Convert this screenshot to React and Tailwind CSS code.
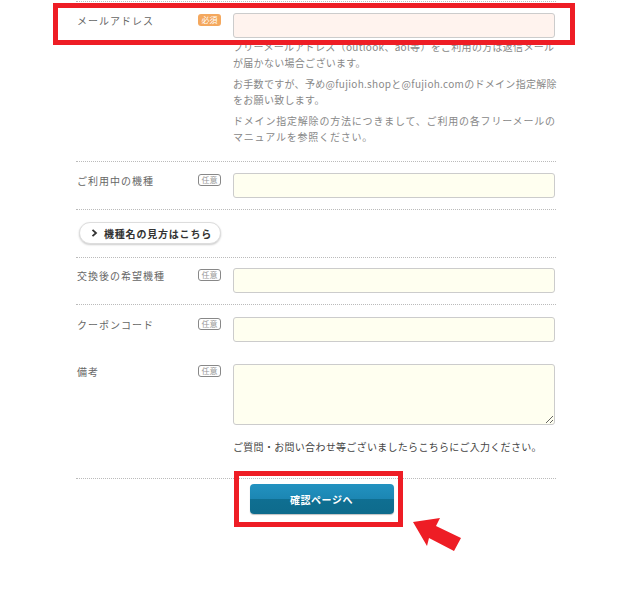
import React from "react";

const Badge = ({ required }) =>
  required ? (
    <span className="flex h-[12px] w-[23px] items-center justify-center rounded-[3px] bg-[#f4a85e] text-[8px] leading-none text-white">
      必須
    </span>
  ) : (
    <span className="flex h-[12px] w-[23px] items-center justify-center rounded-[3px] border border-[#888] text-[8px] leading-none text-[#999]">
      任意
    </span>
  );

const Row = ({ label, required, children, className = "" }) => (
  <div className={"flex items-start border-t border-dotted border-[#bbb] " + className}>
    <div className="w-[122px] shrink-0 pl-[1px] text-[10px] leading-[16px] tracking-[1px] text-[#666]">{label}</div>
    <div className="w-[35px] shrink-0 pt-[1px]">
      <Badge required={required} />
    </div>
    <div className="w-[322px] shrink-0">{children}</div>
  </div>
);

const Field = ({ bg = "bg-[#fffff0]" }) => (
  <input type="text" className={"block h-[25px] w-full rounded-[3px] border border-[#ccc] " + bg} />
);

export default function App() {
  return (
    <div className="relative h-[598px] w-[643px] overflow-hidden bg-white font-['Noto_Sans_CJK_JP',sans-serif]">
      <div className="ml-[76px] w-[480px] pt-[1px]">
        {/* email */}
        <Row label="メールアドレス" required className="pt-[11px] pb-[16px]">
          <Field bg="bg-[#fff3ee]" />
          <div className="mt-[1px] whitespace-nowrap text-[10px] leading-[16px] tracking-[0.3px] text-[#888]">
            <p className="mb-[5px]">
              フリーメールアドレス（outlook、aol等）をご利用の方は返信メール
              <br />
              が届かない場合ございます。
            </p>
            <p className="mb-[5px]">
              お手数ですが、予め@fujioh.shopと@fujioh.comのドメイン指定解除
              <br />
              をお願い致します。
            </p>
            <p className="tracking-[0.8px]">
              ドメイン指定解除の方法につきまして、ご利用の各フリーメールの
              <br />
              マニュアルを参照ください。
            </p>
          </div>
        </Row>

        <Row label="ご利用中の機種" className="pt-[11px] pb-[11px]">
          <Field />
        </Row>

        <div className="border-t border-dotted border-[#bbb] pt-[12px] pb-[13px] pl-[3px]">
          <button className="flex h-[22px] w-[142px] items-center gap-[6px] rounded-full border border-[#ddd] bg-white pl-[11px] text-[10px] font-bold tracking-[0.8px] text-[#333] shadow-[0_1px_2px_rgba(0,0,0,0.2)]">
            <svg width="7" height="8" viewBox="0 0 7 8" className="shrink-0">
              <path d="M1.5 0.8 L5 4 L1.5 7.2" fill="none" stroke="#333" strokeWidth="1.8" />
            </svg>
            機種名の見方はこちら
          </button>
        </div>

        <Row label="交換後の希望機種" className="pt-[10px] pb-[11px]">
          <Field />
        </Row>

        <Row label="クーポンコード" className="pt-[12px] pb-[22px]">
          <Field />
        </Row>

        <div className="flex items-start">
          <div className="w-[122px] shrink-0 pl-[1px] text-[10px] leading-[16px] tracking-[1px] text-[#666]">備考</div>
          <div className="w-[35px] shrink-0 pt-[1px]">
            <Badge />
          </div>
          <div className="w-[322px] shrink-0">
            <textarea className="block h-[61px] w-full rounded-[3px] border border-[#ccc] bg-[#fffff0]" />
            <p className="mt-[14px] pb-[23px] text-[10px] leading-[16px] tracking-[0.3px] text-[#444]">
              ご質問・お問い合わせ等ございましたらこちらにご入力ください。
            </p>
          </div>
        </div>
        <div className="border-t border-dotted border-[#bbb]" />
      </div>

      <div className="mt-[5px] flex justify-center">
        <button className="h-[30px] w-[144px] rounded-[4px] bg-[linear-gradient(#2292c0_0%,#1c86b3_50%,#0f6f92_50%,#0e6b8c_100%)] text-[10px] font-bold tracking-[0.5px] text-white shadow-[0_1px_1px_rgba(0,0,0,0.25)]">
          確認ページへ
        </button>
      </div>

      {/* annotations */}
      <div className="pointer-events-none absolute left-[53px] top-[3px] h-[42px] w-[522px] border-[5px] border-[#ee1d25]" />
      <div className="pointer-events-none absolute left-[234px] top-[471px] h-[56px] w-[169px] border-[5px] border-[#ee1d25]" />
      <svg className="pointer-events-none absolute left-0 top-0" width="643" height="598" viewBox="0 0 643 598">
        <polygon
          points="413,522 440,518 436,526 461,538 454,551 429,538 427,546"
          fill="#ee1d25"
        />
      </svg>
    </div>
  );
}
